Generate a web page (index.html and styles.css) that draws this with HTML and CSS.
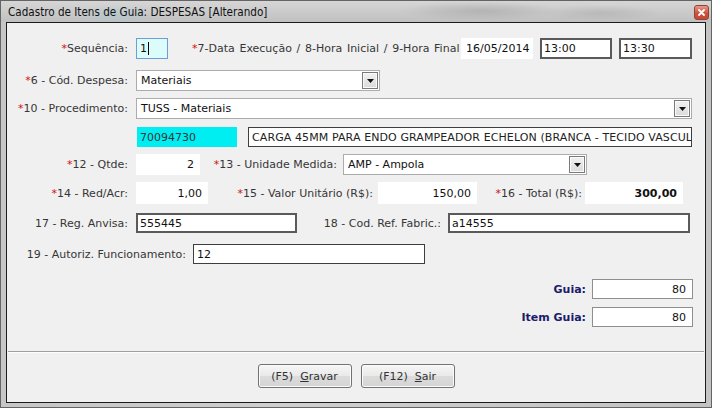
FILE: index.html
```html
<!DOCTYPE html>
<html lang="pt">
<head>
<meta charset="utf-8">
<title>Cadastro de Itens de Guia</title>
<link rel="stylesheet" href="styles.css">
</head>
<body>
<div class="window">
  <div class="titlebar">
    <span class="title">Cadastro de Itens de Guia: DESPESAS [Alterando]</span>
    <span class="close"><svg width="7" height="7" viewBox="0 0 7 7"><path d="M1 1L6 6M6 1L1 6" stroke="#fff" stroke-width="1.8" stroke-linecap="round"/></svg></span>
  </div>
  <div class="client">
    <div class="row r1">
      <span class="lbl c121"><span class="req">*</span>Sequência:</span>
      <div class="field seq">1<span class="caret"></span></div>
      <span class="lbl datelbl"><span class="req">*</span>7-Data Execução / 8-Hora Inicial / 9-Hora Final</span>
      <div class="field flat date">16/05/2014</div>
      <div class="field heavy hour h1">13:00</div>
      <div class="field heavy hour h2">13:30</div>
    </div>
    <div class="row r2">
      <span class="lbl c121"><span class="req">*</span>6 - Cód. Despesa:</span>
      <div class="field select despesa">Materiais<span class="dd"><svg width="7" height="4" viewBox="0 0 7 4"><path d="M0 0H7L3.5 4Z" fill="#111"/></svg></span></div>
    </div>
    <div class="row r3">
      <span class="lbl c121"><span class="req">*</span>10 - Procedimento:</span>
      <div class="field select proc">TUSS - Materiais<span class="dd"><svg width="7" height="4" viewBox="0 0 7 4"><path d="M0 0H7L3.5 4Z" fill="#111"/></svg></span></div>
    </div>
    <div class="row r4">
      <span class="c121"></span>
      <div class="field code">70094730</div>
      <div class="field thin desc">CARGA 45MM PARA ENDO GRAMPEADOR ECHELON (BRANCA - TECIDO VASCULAR)</div>
    </div>
    <div class="row r5">
      <span class="lbl c121"><span class="req">*</span>12 - Qtde:</span>
      <div class="field flat num qtde">2</div>
      <span class="lbl l13"><span class="req">*</span>13 - Unidade Medida:</span>
      <div class="field select unid">AMP - Ampola<span class="dd"><svg width="7" height="4" viewBox="0 0 7 4"><path d="M0 0H7L3.5 4Z" fill="#111"/></svg></span></div>
    </div>
    <div class="row r6">
      <span class="lbl c121"><span class="req">*</span>14 - Red/Acr:</span>
      <div class="field flat num redacr">1,00</div>
      <span class="lbl l15"><span class="req">*</span>15 - Valor Unitário (R$):</span>
      <div class="field flat num valor">150,00</div>
      <span class="lbl l16"><span class="req">*</span>16 - Total (R$):</span>
      <div class="field flat num total">300,00</div>
    </div>
    <div class="row r7">
      <span class="lbl c121">17 - Reg. Anvisa:</span>
      <div class="field heavy anvisa">555445</div>
      <span class="lbl l18">18 - Cod. Ref. Fabric.:</span>
      <div class="field heavy codref">a14555</div>
    </div>
    <div class="row r8">
      <span class="lbl l19">19 - Autoriz. Funcionamento:</span>
      <div class="field thin autoriz">12</div>
    </div>
    <div class="row r9 right">
      <span class="lbl strong">Guia:</span>
      <div class="field gray num guia">80</div>
    </div>
    <div class="row r10 right">
      <span class="lbl strong">Item Guia:</span>
      <div class="field gray num guia">80</div>
    </div>
    <div class="separator"></div>
    <div class="buttons">
      <button class="btn">(F5)&nbsp; <u>G</u>ravar</button>
      <button class="btn">(F12)&nbsp; <u>S</u>air</button>
    </div>
  </div>
</div>
</body>
</html>
```
FILE: styles.css
```css
* { box-sizing: border-box; }

body {
  margin: 0;
  font-family: "DejaVu Sans", sans-serif;
  font-size: 11px;
  color: #363636;
}

.window {
  width: 712px;
  height: 408px;
  display: flex;
  flex-direction: column;
  border: 1px solid #646464;
  background: linear-gradient(90deg, #c6c6c6, #cfcfcf 40%, #c3c3c3);
}

.titlebar {
  height: 21px;
  display: flex;
  align-items: center;
  justify-content: space-between;
  padding: 0 2px 0 7px;
  background:
    radial-gradient(ellipse 40px 10px at 115px 14px, rgba(150, 200, 210, 0.35), transparent),
    radial-gradient(ellipse 80px 10px at 480px 10px, rgba(150, 150, 150, 0.45), transparent),
    radial-gradient(ellipse 60px 8px at 600px 12px, rgba(160, 160, 160, 0.4), transparent),
    linear-gradient(#d6d6d6, #c0c0c0);
}

.title {
  font-family: "DejaVu Sans Condensed", "DejaVu Sans", sans-serif;
  font-stretch: condensed;
  font-size: 11.6px;
  color: #111;
  padding-top: 1px;
}

.close {
  width: 15px;
  height: 15px;
  margin-top: 1px;
  display: flex;
  align-items: center;
  justify-content: center;
  border: 1px solid #8d4538;
  border-radius: 3px;
  background: linear-gradient(#e89a8a, #d0503c 55%, #c44a36);
}

.client {
  flex: 1;
  margin: 0 5px 4px 5px;
  border: 1px solid #1b1b1b;
  background: #f0f0f0;
  display: flex;
  flex-direction: column;
}

.row {
  display: flex;
  align-items: center;
}

.r1 { margin-top: 15px; height: 21px; }
.r2 { margin-top: 11px; height: 21px; }
.r3 { margin-top: 7px; height: 21px; }
.r4 { margin-top: 8px; height: 20px; }
.r5 { margin-top: 7px; height: 21px; }
.r6 { margin-top: 7px; height: 22px; }
.r7 { margin-top: 9px; height: 20px; }
.r8 { margin-top: 11px; height: 20px; }
.r9 { margin-top: 15px; height: 20px; }
.r10 { margin-top: 8px; height: 20px; }

.right { justify-content: flex-end; padding-right: 12px; }

.lbl { white-space: nowrap; }
.c121 { width: 121px; text-align: right; flex: none; }
.req { color: #d01010; }

.strong {
  font-weight: bold;
  color: #1c1c6a;
  margin-right: 6px;
}

.field {
  height: 100%;
  display: flex;
  align-items: center;
  padding: 0 4px;
  font-size: 11px;
  color: #111;
  background: #fff;
  white-space: nowrap;
  overflow: hidden;
  flex: none;
}

.num { justify-content: flex-end; padding-right: 6px; }
.flat { border: none; }
.heavy { border: 2px solid #5a5a5a; padding-left: 2px; }
.thin { border: 1px solid #3e3e3e; padding-left: 3px; }
.gray { border: 1px solid #8e8e8e; }

.seq {
  width: 32px;
  margin-left: 8px;
  background: #dcfcfc;
  border: 1px solid #6d9fd6;
  padding-left: 3px;
}
.caret {
  width: 1px;
  height: 13px;
  background: #000;
  margin-left: 1px;
}

.datelbl { margin-left: 24px; width: 265px; word-spacing: 1.2px; }
.date { width: 72px; margin-left: 4px; padding-left: 5px; }
.hour { width: 72px; margin-left: 7px; }
.h2 { width: 73px; }

.select {
  position: relative;
  border: 1px solid #acacac;
  padding-left: 4px;
  margin-left: 8px;
}
.despesa { width: 244px; }
.proc { width: 556px; }
.unid { width: 244px; margin-left: 6px; }

.dd {
  position: absolute;
  right: 1px;
  top: 1px;
  bottom: 1px;
  width: 16px;
  display: flex;
  align-items: center;
  justify-content: center;
  border: 1px solid #7a7a7a;
  box-shadow: inset 0 0 0 1px #fafafa;
  background: linear-gradient(#f2f2f2, #dadada);
}

.code {
  width: 100px;
  margin-left: 9px;
  background: #00eef2;
  color: #333;
  padding-left: 3px;
}
.desc { width: 444px; margin-left: 11px; color: #222; letter-spacing: 0.1px; }

.qtde { width: 64px; margin-left: 8px; }
.l13 { width: 137px; text-align: right; flex: none; }

.redacr { width: 72px; margin-left: 8px; }
.l15 { width: 165px; text-align: right; flex: none; }
.valor { width: 99px; margin-left: 5px; }
.l16 { width: 105px; text-align: right; flex: none; }
.total { width: 98px; margin-left: 3px; font-weight: bold; color: #111; }

.anvisa { width: 161px; margin-left: 8px; }
.l18 { width: 144px; text-align: right; flex: none; }
.codref { width: 242px; margin-left: 7px; }

.l19 { width: 179px; text-align: right; flex: none; }
.autoriz { width: 232px; margin-left: 7px; }

.guia { width: 101px; }

.separator {
  margin: 24px 1px 0 1px;
  height: 2px;
  border-top: 1px solid #a0a0a0;
  border-bottom: 1px solid #fdfdfd;
}

.buttons {
  margin-top: 11px;
  display: flex;
  justify-content: center;
  gap: 9px;
}

.btn {
  width: 94px;
  height: 24px;
  font-family: inherit;
  font-size: 11px;
  color: #333;
  border: 1px solid #727272;
  border-radius: 3px;
  background: linear-gradient(#f6f6f6, #e9e9e9 50%, #dcdcdc 51%, #d4d4d4);
  box-shadow: inset 0 0 0 1px #fbfbfb;
  padding: 0;
}
```
